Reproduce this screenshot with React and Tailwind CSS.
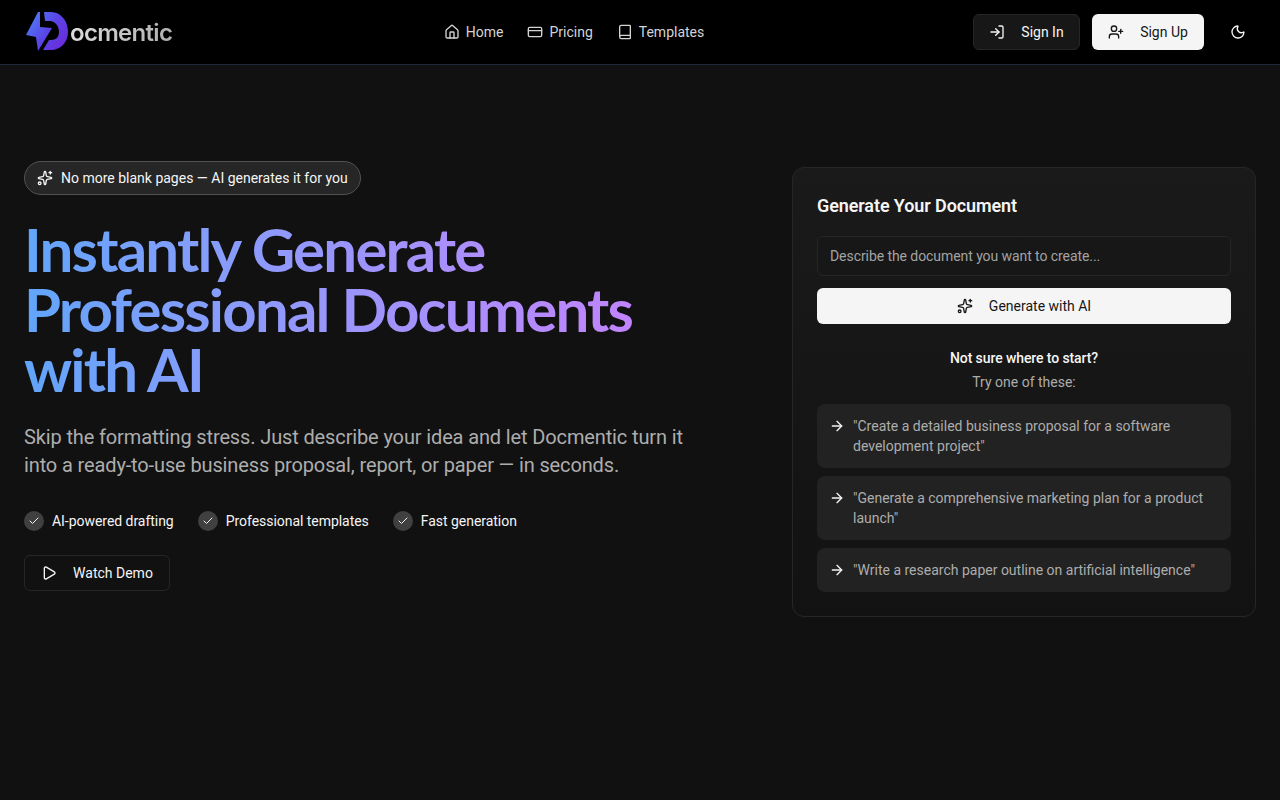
import React from "react";
import { Home, CreditCard, Book, LogIn, UserPlus, Moon, Sparkles, Check, Play, ArrowRight } from "lucide-react";

function Logo() {
  return (
    <div className="flex w-[151px] items-center">
      <svg width="46" height="42" viewBox="0 0 46 42" className="shrink-0">
        <defs>
          <linearGradient id="lg" gradientUnits="userSpaceOnUse" x1="2" y1="6" x2="44" y2="36">
            <stop offset="0" stopColor="#4b82f8" />
            <stop offset="0.5" stopColor="#5a45e6" />
            <stop offset="1" stopColor="#6d28d9" />
          </linearGradient>
        </defs>
        <path d="M14 1 L2 24 L12 26 L14 40 L28 17 L16 16 L16 1 Z" fill="url(#lg)" />
        <path d="M20 1 H27 C37 1 44 10 44 21 C44 31 37 39 27 39 H19 L25 29 H27 C32 29 35 26 35 21 C35 15 31 10 26 10 H21 Z" fill="url(#lg)" />
      </svg>
      <span className="mt-[1px] bg-gradient-to-r from-[#dcdcdc] to-[#b0b0b0] bg-clip-text font-['Inter',sans-serif] text-[24px] leading-none font-semibold tracking-[-0.7px] text-transparent">ocmentic</span>
    </div>
  );
}

function NavLink({ icon: Icon, label }) {
  return (
    <a className="flex items-center gap-1.5 text-sm text-[#d4d4d4]">
      <Icon size={16} strokeWidth={2} />
      <span>{label}</span>
    </a>
  );
}

function Feature({ label }) {
  return (
    <div className="flex items-center gap-2 text-sm tracking-[-0.04px] text-[#f5f5f5]">
      <span className="flex h-5 w-5 items-center justify-center rounded-full bg-[#404040]">
        <Check size={12} strokeWidth={2} className="text-[#f5f5f5]" />
      </span>
      <span>{label}</span>
    </div>
  );
}

function Prompt({ children }) {
  return (
    <button className="flex w-full items-start gap-2 rounded-lg bg-[#222222] p-3 text-left text-sm leading-5 text-[#adadad]">
      <ArrowRight size={16} strokeWidth={2} className="mt-[2px] shrink-0 text-[#f5f5f5]" />
      <span>{children}</span>
    </button>
  );
}

export default function App() {
  return (
    <div className="min-h-screen bg-[#111111] font-['Roboto',sans-serif] text-white">
      <nav className="flex h-[65px] items-center justify-between border-b border-[#1e293b] bg-black px-6">
        <Logo />
        <div className="flex items-center gap-6">
          <NavLink icon={Home} label="Home" />
          <NavLink icon={CreditCard} label="Pricing" />
          <NavLink icon={Book} label="Templates" />
        </div>
        <div className="flex items-center">
          <button className="flex h-9 w-[107px] items-center justify-center gap-4 rounded-md border border-[#262626] bg-[#171717] text-sm text-[#f5f5f5]">
            <LogIn size={16} strokeWidth={2} />Sign In
          </button>
          <button className="ml-3 flex h-9 w-[112px] items-center justify-center gap-4 rounded-md bg-[#f5f5f5] text-sm text-[#171717]">
            <UserPlus size={16} strokeWidth={2} />Sign Up
          </button>
          <button className="ml-4 flex h-9 w-9 items-center justify-center text-[#f5f5f5]">
            <Moon size={16} strokeWidth={2} />
          </button>
        </div>
      </nav>

      <main className="flex items-start justify-between px-6 pt-24">
        <div className="flex flex-col items-start">
          <div className="flex h-[34px] items-center gap-2 rounded-full border border-[#525252] bg-[#262626] px-3 text-sm text-[#f5f5f5]">
            <Sparkles size={16} strokeWidth={2} />
            <span>No more blank pages — AI generates it for you</span>
          </div>
          <h1 className="mt-6 w-fit bg-gradient-to-r from-[#60a5fa] to-[#c084fc] bg-clip-text font-['Lato',sans-serif] text-6xl leading-[60px] font-bold tracking-[-1.8px] text-transparent">
            Instantly Generate<br />Professional Documents<br />with AI
          </h1>
          <p className="mt-6 w-[672px] text-xl leading-7 tracking-[-0.13px] text-[#adadad]">
            Skip the formatting stress. Just describe your idea and let Docmentic turn it into a ready-to-use business proposal, report, or paper — in seconds.
          </p>
          <div className="mt-8 flex items-center gap-6">
            <Feature label="AI-powered drafting" />
            <Feature label="Professional templates" />
            <Feature label="Fast generation" />
          </div>
          <button className="mt-6 flex h-9 w-[146px] items-center justify-center gap-4 rounded-md border border-[#262626] text-sm text-[#f5f5f5]">
            <Play size={16} strokeWidth={2} />Watch Demo
          </button>
        </div>

        <section className="mt-[6px] w-[464px] rounded-xl border border-[#262626] bg-gradient-to-b from-[#1a1a1a] to-[#121212] p-6">
          <h2 className="text-lg leading-7 font-semibold tracking-[-0.1px] text-[#f5f5f5]">Generate Your Document</h2>
          <div className="mt-4 flex h-10 items-center rounded-md border border-[#262626] bg-[#171717] px-3 pb-[1px] text-sm tracking-[-0.07px] text-[#a3a3a3]">
            Describe the document you want to create...
          </div>
          <button className="mt-3 flex h-9 w-full items-center justify-center gap-4 rounded-md bg-[#f5f5f5] text-sm text-[#171717]">
            <Sparkles size={16} strokeWidth={2} />Generate with AI
          </button>
          <div className="mt-6 text-center text-sm">
            <p className="leading-5 font-medium tracking-[-0.1px] text-[#f5f5f5]">Not sure where to start?</p>
            <p className="mt-1 leading-5 text-[#adadad]">Try one of these:</p>
          </div>
          <div className="mt-3 flex flex-col gap-2">
            <Prompt>"Create a detailed business proposal for a software development project"</Prompt>
            <Prompt>"Generate a comprehensive marketing plan for a product launch"</Prompt>
            <Prompt>"Write a research paper outline on artificial intelligence"</Prompt>
          </div>
        </section>
      </main>
    </div>
  );
}
